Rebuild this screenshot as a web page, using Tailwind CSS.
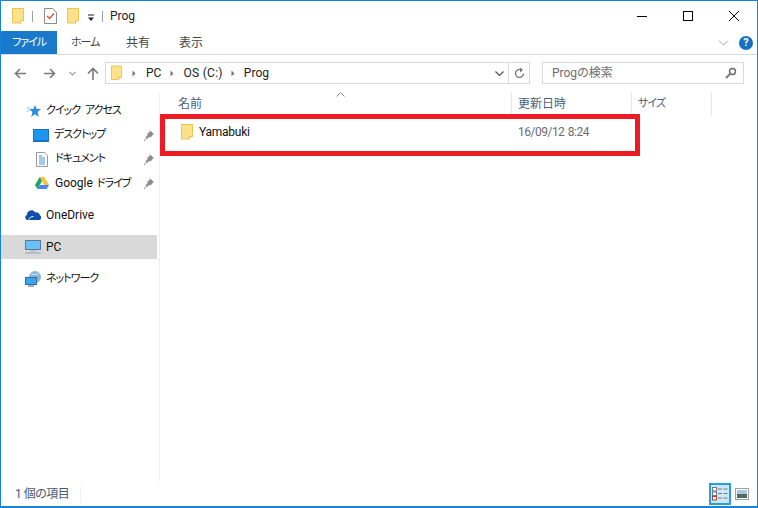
<!DOCTYPE html>
<html lang="ja">
  <head>
    <meta charset="UTF-8" />
    <script src="https://cdn.jsdelivr.net/npm/@tailwindcss/browser@4"></script>
  </head>
  <body class="bg-white overflow-hidden">
    <div class="relative w-[758px] h-[508px] flex flex-col border-x border-t border-b-2 border-[#1883d7] bg-white text-[12px] leading-[16px] whitespace-nowrap text-[#1a1a1a] font-['Roboto','Noto_Sans_CJK_JP',sans-serif] [font-feature-settings:'palt'] overflow-hidden">

      <!-- title bar -->
      <div class="h-[30px] shrink-0 flex items-center pl-[10px]">
        <svg width="14" height="16" viewBox="0 0 14 16"><path d="M1.500.5h11v12.500h-3v2h-8z" fill="#fde28b" stroke="#e8c452"/><path d="M9.500 15.500v-3h3" fill="#fff3c4" stroke="#e8c452"/></svg>
        <div class="w-px h-[11px] bg-[#a0a0a0] ml-[7px]"></div>
        <svg class="ml-[11px]" width="13" height="16" viewBox="0 0 13 16"><path d="M.5.500h8l4 4v11H.5z" fill="#fff" stroke="#8a8a8a"/><path d="M3 8l2.500 2.500 4.500-5" fill="none" stroke="#e2572a" stroke-width="1.400"/></svg>
        <svg class="ml-[9px]" width="14" height="16" viewBox="0 0 14 16"><path d="M1.500.5h11v12.500h-3v2h-8z" fill="#fde28b" stroke="#e8c452"/><path d="M9.500 15.500v-3h3" fill="#fff3c4" stroke="#e8c452"/></svg>
        <svg class="ml-[7px] mt-[3px]" width="8" height="8" viewBox="0 0 8 8"><path d="M1 1h6" stroke="#222"/><path d="M1 3.500h6l-3 3.500z" fill="#222"/></svg>
        <div class="w-px h-[11px] bg-[#a0a0a0] ml-[7px]"></div>
        <span class="ml-[7px] text-[#222]">Prog</span>
        <div class="ml-auto flex items-center">
          <div class="w-[46px] flex justify-center"><div class="w-[10px] h-px bg-black"></div></div>
          <div class="w-[46px] flex justify-center"><div class="w-[10px] h-[10px] border border-black"></div></div>
          <div class="w-[46px] flex justify-center">
            <svg width="10" height="10" viewBox="0 0 10 10"><path d="M0 0l10 10M10 0L0 10" stroke="#000" stroke-width="1"/></svg>
          </div>
        </div>
      </div>

      <!-- ribbon tabs -->
      <div class="h-[24px] shrink-0 flex items-center border-b border-[#dadbdc]">
        <div class="w-[56px] h-[23px] bg-[#1979ca] text-white text-[11px] tracking-[-1px] flex items-center justify-center">ファイル</div>
        <div class="ml-[14px] w-[28px] text-[#444] text-[11px] tracking-[-1px]">ホーム</div>
        <div class="ml-[27px] text-[#444]">共有</div>
        <div class="ml-[29px] text-[#444]">表示</div>
        <svg class="ml-auto" width="11" height="6" viewBox="0 0 11 6"><path d="M1 .5l4.500 4.500L10 .5" fill="none" stroke="#a8a8a8"/></svg>
        <div class="ml-[10px] mr-[4px] w-[14px] h-[14px] rounded-full bg-[#1470c4] text-white font-bold text-[11px] leading-[14px] text-center">?</div>
      </div>

      <!-- address row -->
      <div class="h-[36px] shrink-0 flex items-center">
        <svg class="ml-[13px]" width="12" height="11" viewBox="0 0 12 11"><path d="M12 5.500H1.500M6 1L1.500 5.500 6 10" fill="none" stroke="#7a7a7a" stroke-width="1.600"/></svg>
        <svg class="ml-[18px]" width="12" height="11" viewBox="0 0 12 11"><path d="M0 5.500h10.500M6 1l4.500 4.500L6 10" fill="none" stroke="#7a7a7a" stroke-width="1.600"/></svg>
        <svg class="ml-[13px]" width="7" height="5" viewBox="0 0 7 5"><path d="M.5 1l3 3 3-3" fill="none" stroke="#a0a0a0" stroke-width="1.200"/></svg>
        <svg class="ml-[11px]" width="12" height="13" viewBox="0 0 12 13"><path d="M6 13V1.500M1 6.500l5-5 5 5" fill="none" stroke="#7a7a7a" stroke-width="1.600"/></svg>
        <div class="ml-[6px] w-[425px] h-[22px] border border-[#d9d9d9] flex items-center">
          <svg class="ml-[4px]" width="13" height="16" viewBox="0 0 14 16"><path d="M1.500.5h11v12.500h-3v2h-8z" fill="#fde28b" stroke="#e8c452"/><path d="M9.500 15.500v-3h3" fill="#fff3c4" stroke="#e8c452"/></svg>
          <svg class="ml-[9px]" width="4" height="7" viewBox="0 0 4 7"><path d="M.5.500l3 3-3 3z" fill="#777"/></svg>
          <span class="ml-[10px] text-[#222]">PC</span>
          <svg class="ml-[9px]" width="4" height="7" viewBox="0 0 4 7"><path d="M.5.500l3 3-3 3z" fill="#777"/></svg>
          <span class="ml-[9px] text-[#222] tracking-[0.3px]">OS (C:)</span>
          <svg class="ml-[8px]" width="4" height="7" viewBox="0 0 4 7"><path d="M.5.500l3 3-3 3z" fill="#777"/></svg>
          <span class="ml-[9px] text-[#222]">Prog</span>
          <svg class="ml-auto mr-[4px]" width="9" height="5" viewBox="0 0 9 5"><path d="M.5.500l4 4 4-4" fill="none" stroke="#555" stroke-width="1.200"/></svg>
          <div class="w-[21px] h-full border-l border-[#d9d9d9] flex items-center justify-center">
            <svg width="11" height="12" viewBox="0 0 11 12"><path d="M9.500 6.500a4 4 0 1 1-2-3.500" fill="none" stroke="#777" stroke-width="1.300"/><path d="M6 .5v5l3-2.500z" fill="#777"/></svg>
          </div>
        </div>
        <div class="ml-[12px] w-[202px] h-[22px] border border-[#d9d9d9] flex items-center pl-[9px] pr-[6px] text-[#6d6d6d]">
          <span>Progの検索</span>
          <svg class="ml-auto" width="12" height="12" viewBox="0 0 12 12"><circle cx="7.500" cy="4.500" r="3" fill="none" stroke="#666" stroke-width="1.400"/><path d="M5 7L1 11" stroke="#777" stroke-width="2"/></svg>
        </div>
      </div>

      <!-- main -->
      <div class="flex-1 flex min-h-0 pt-px">
        <!-- nav pane -->
        <div class="w-[159px] shrink-0 border-r border-[#f0f0f0] pt-[7px] pr-[2px] text-[#111]">
          <div class="h-[24px] flex items-center pl-[26px]">
            <svg width="14" height="14" viewBox="0 0 14 14"><path d="M8 1l1.700 4H14l-3.400 2.900L11.800 13 8 10.200 4.200 13l1.200-5.100L2 5h4.300z" fill="#2f8fdf"/><path d="M0 4h3M0 7h2" stroke="#8cc4ef"/></svg>
            <span class="ml-[5px] text-[11px] tracking-[-1px] [word-spacing:3px]">クイック アクセス</span>
          </div>
          <div class="h-[24px] flex items-center pl-[32px]">
            <svg width="16" height="13" viewBox="0 0 16 13"><rect x=".5" y=".5" width="15" height="11" fill="#1e96f0" stroke="#1873bd"/><path d="M0 12.500h16" stroke="#1873bd"/></svg>
            <span class="ml-[5px] text-[11px] tracking-[-1px]">デスクトップ</span>
            <svg class="ml-auto mr-[3px]" width="10" height="11" viewBox="0 0 10 11"><path d="M5.500 0l4.500 4-1.200.8-2.500 3-.5-1.300L3 9 1.500 7.500l2.500-3L2.700 4l3-2z" fill="#8c8c8c"/><path d="M3 7.500L0 11" stroke="#8c8c8c"/></svg>
          </div>
          <div class="h-[24px] flex items-center pl-[35px]">
            <svg width="12" height="15" viewBox="0 0 12 15"><path d="M.5.500h8l3 3v11H.5z" fill="#fff" stroke="#999"/><path d="M3 4h3M3 6h6M3 8h6M3 10h6M3 12h6" stroke="#3f94d8"/></svg>
            <span class="ml-[7px] text-[11px] tracking-[-1px]">ドキュメント</span>
            <svg class="ml-auto mr-[3px]" width="10" height="11" viewBox="0 0 10 11"><path d="M5.500 0l4.500 4-1.200.8-2.500 3-.5-1.300L3 9 1.500 7.500l2.500-3L2.700 4l3-2z" fill="#8c8c8c"/><path d="M3 7.500L0 11" stroke="#8c8c8c"/></svg>
          </div>
          <div class="h-[24px] flex items-center pl-[34px]">
            <svg width="14" height="12" viewBox="0 0 14 12"><path d="M4.700 0h4.600l4.700 8H9.300z" fill="#f6c33b"/><path d="M4.700 0L0 8l2.300 4 4.700-8z" fill="#1fa463"/><path d="M2.300 12h9.400L14 8H4.700z" fill="#4688f1"/></svg>
            <span class="ml-[6px]">Google <span class="ml-[1px] text-[11px] tracking-[-1px]">ドライブ</span></span>
            <svg class="ml-auto mr-[3px]" width="10" height="11" viewBox="0 0 10 11"><path d="M5.500 0l4.500 4-1.200.8-2.500 3-.5-1.300L3 9 1.500 7.500l2.500-3L2.700 4l3-2z" fill="#8c8c8c"/><path d="M3 7.500L0 11" stroke="#8c8c8c"/></svg>
          </div>
          <div class="h-[24px] mt-[8px] flex items-center pl-[24px]">
            <svg width="16" height="10" viewBox="0 0 16 10"><path d="M2.500 10A2.500 2.500 0 0 1 2 5.100 4.500 4.500 0 0 1 10.300 2.500 3.600 3.600 0 0 1 15 5.500 2.400 2.400 0 0 1 13.500 10z" fill="#0f4ea8"/><path d="M4 9.500c.5-2 2-3 4.500-3" fill="none" stroke="#fff"/></svg>
            <span class="ml-[5px]">OneDrive</span>
          </div>
          <div class="h-[24px] mt-[8px] flex items-center pl-[24px] bg-[#d9d9d9]">
            <svg width="16" height="14" viewBox="0 0 16 14"><rect x=".5" y=".5" width="15" height="9" fill="#6cc0f8" stroke="#56789a"/><path d="M5 11h6" stroke="#9ab0c4"/><path d="M0 13h16" stroke="#8fa6bb"/></svg>
            <span class="ml-[5px]">PC</span>
          </div>
          <div class="h-[24px] mt-[8px] flex items-center pl-[24px]">
            <svg width="16" height="16" viewBox="0 0 16 16"><circle cx="10" cy="6" r="6" fill="#8bb5d6"/><path d="M6 3c2 1 5 1 8-1" stroke="#d5e6f3" fill="none"/><rect x=".5" y="6.500" width="11" height="7" fill="#39a4ef" stroke="#3a6b96"/><path d="M3 15h6" stroke="#7d93a6" stroke-width="1.500"/></svg>
            <span class="ml-[5px] text-[11px] tracking-[-1px]">ネットワーク</span>
          </div>
        </div>

        <!-- file list -->
        <div class="relative flex-1 min-w-0">
          <svg class="absolute left-[176px] top-[0px]" width="9" height="5" viewBox="0 0 9 5"><path d="M.5 4.500l4-4 4 4" fill="none" stroke="#888"/></svg>
          <div class="h-[24px] flex items-stretch text-[#4c607a]">
            <div class="w-[352px] pl-[18px] flex items-center border-r border-[#e5e5e5]">名前</div>
            <div class="w-[120px] pl-[6px] flex items-center border-r border-[#e5e5e5]">更新日時</div>
            <div class="w-[80px] pl-[6px] flex items-center border-r border-[#e5e5e5] text-[11px] tracking-[-1px]">サイズ</div>
          </div>
          <div class="h-[24px] mt-[4px] flex items-center">
            <div class="w-[352px] pl-[20px] flex items-center">
              <svg width="14" height="16" viewBox="0 0 14 16"><path d="M1.500.5h11v12.500h-3v2h-8z" fill="#fde28b" stroke="#e8c452"/><path d="M9.500 15.500v-3h3" fill="#fff3c4" stroke="#e8c452"/></svg>
              <span class="ml-[5px] text-[#111] tracking-[-0.25px]">Yamabuki</span>
            </div>
            <div class="pl-[6px] text-[#6d6d6d] tracking-[-0.5px] [word-spacing:1px]">16/09/12 8:24</div>
          </div>
          <!-- red annotation -->
          <div class="absolute left-0 top-[22px] w-[480px] h-[42px] border-[5px] border-[#ed1c24]"></div>
        </div>
      </div>

      <!-- status bar -->
      <div class="h-[24px] shrink-0 flex items-center pl-[14px] text-[#4c5a70]">
        <span class="w-[65px] tracking-[-0.5px]">1 個の項目</span>
        <div class="w-px h-[16px] bg-[#f0f0f0]"></div>
        <div class="ml-auto w-[22px] h-[22px] bg-[#cce8f6] border-2 border-[#26a0da] flex items-center justify-center">
          <svg width="16" height="14" viewBox="0 0 16 14"><rect x=".5" y=".5" width="4" height="3.500" fill="#fff" stroke="#777"/><rect x=".5" y="5" width="4" height="3.500" fill="#fff" stroke="#777"/><rect x=".5" y="9.500" width="4" height="3.500" fill="#fff" stroke="#a44"/><path d="M6 2h4M11.500 2h4M6 6.500h4M11.500 6.500h4M6 11h4M11.500 11h4" stroke="#777"/></svg>
        </div>
        <svg class="ml-[4px] mr-[8px]" width="14" height="12" viewBox="0 0 14 12"><rect x=".5" y=".5" width="13" height="11" fill="#fff" stroke="#a0a0a0"/><rect x="2" y="2" width="10" height="4" fill="#a9c9e2"/><rect x="2" y="6" width="10" height="4" fill="#4f6a5e"/></svg>
      </div>
    </div>
  </body>
</html>
